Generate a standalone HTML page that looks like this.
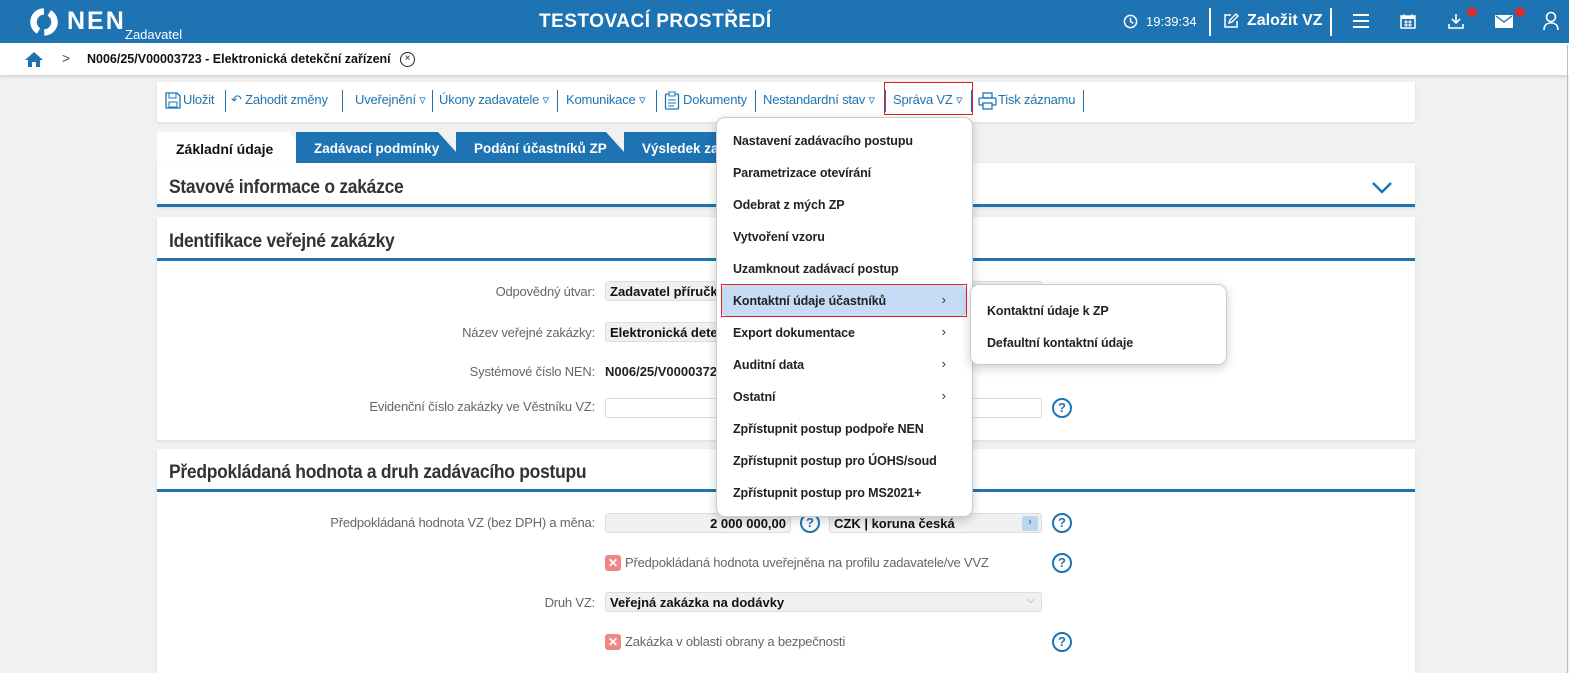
<!DOCTYPE html>
<html><head><meta charset="utf-8"><style>
*{box-sizing:border-box;margin:0;padding:0}
body{width:1569px;height:673px;overflow:hidden;background:#f1f1f1;font-family:"Liberation Sans",Arial,sans-serif;position:relative;font-size:13px;color:#222}
.abs{position:absolute}
.hdr{left:0;top:0;width:1569px;height:43px;background:#1e74b3;color:#fff}
.bc{left:0;top:43px;width:1569px;height:32px;background:#fff;box-shadow:0 2px 3px rgba(0,0,0,.12)}
.panel{background:#fff;left:157px;width:1258px;box-shadow:0 1px 3px rgba(0,0,0,.1)}
.ti{position:absolute;top:92px;color:#1e74b3;font-size:13px;white-space:nowrap;letter-spacing:-.2px}
.sp{position:absolute;top:90px;width:1px;height:22px;background:#1e74b3}
.h2{font-size:19px;color:#333;font-weight:bold;letter-spacing:-.3px;transform:scaleX(.92);transform-origin:left}
.line{left:0;width:1258px;height:3px;background:#1e74b3}
.lbl{color:#666;font-size:13px;text-align:right;width:440px;left:155px;letter-spacing:-.2px}
.inp{left:605px;height:20px;border:1px solid #ddd;border-radius:3px;background:#f0f0f0;font-size:13px;font-weight:bold;padding:2px 4px;color:#111}
.q{width:20px;height:20px;border:2px solid #1e74b3;border-radius:50%;color:#1e74b3;font-weight:bold;font-size:13px;text-align:center;line-height:16px}
.menu{background:#fff;border:1px solid #ccc;border-radius:9px;box-shadow:0 3px 10px rgba(0,0,0,.2)}
.mi{position:absolute;left:16px;font-size:12.5px;font-weight:bold;color:#222;letter-spacing:-.1px}
.arr{position:absolute;right:26px;font-size:13px;color:#333}
.tab{top:132px;height:31px;color:#fff;font-weight:bold;font-size:13.5px;line-height:34px;padding-left:18px;background:#1e74b3;clip-path:polygon(0 0,calc(100% - 28px) 0,100% 100%,0 100%)}
.x{width:16px;height:16px;background:#e88;border-radius:3px;color:#fff;font-size:12px;text-align:center;line-height:16px;font-weight:bold}
</style></head><body>
<div class="abs hdr">
  <svg class="abs" style="left:29px;top:7px" width="30" height="30" viewBox="0 0 30 30"><circle cx="15" cy="15" r="10.5" fill="none" stroke="#fff" stroke-width="6.5" stroke-dasharray="27 6" transform="rotate(-60 15 15)"/></svg>
  <div class="abs" style="left:67px;top:7px;font-size:25px;font-weight:bold;letter-spacing:2px">NEN</div>
  <div class="abs" style="left:125px;top:27px;font-size:13px">Zadavatel</div>
  <div class="abs" style="left:539px;top:11px;font-size:19px;font-weight:bold;letter-spacing:.5px">TESTOVACÍ PROSTŘEDÍ</div>
  <svg class="abs" style="left:1123px;top:14px" width="15" height="15" viewBox="0 0 16 16"><circle cx="8" cy="8" r="6.5" fill="none" stroke="#fff" stroke-width="1.6"/><path d="M8 4v4l3 2" stroke="#fff" stroke-width="1.6" fill="none"/></svg>
  <div class="abs" style="left:1146px;top:14px;font-size:13px">19:39:34</div>
  <div class="abs" style="left:1209px;top:8px;width:2px;height:28px;background:#fff"></div>
  <svg class="abs" style="left:1222px;top:12px" width="18" height="18" viewBox="0 0 18 18"><path d="M9 3H3v12h12V9" fill="none" stroke="#fff" stroke-width="1.5"/><path d="M7 11l1-3 6-6 2 2-6 6z" fill="none" stroke="#fff" stroke-width="1.4"/></svg>
  <div class="abs" style="left:1247px;top:12px;font-size:16px;font-weight:bold">Založit VZ</div>
  <div class="abs" style="left:1330px;top:8px;width:2px;height:28px;background:#fff"></div>
  <div class="abs" style="left:1353px;top:14px;width:16px;height:2px;background:#fff;box-shadow:0 6px 0 #fff,0 12px 0 #fff"></div>
  <svg class="abs" style="left:1400px;top:13px" width="16" height="16" viewBox="0 0 16 16"><rect x="1" y="3" width="14" height="12" fill="none" stroke="#fff" stroke-width="1.5"/><rect x="1" y="3" width="14" height="3" fill="#fff"/><path d="M4 1v3M12 1v3M4 9h8M4 12h8M6 7v7M10 7v7" stroke="#fff"/></svg>
  <svg class="abs" style="left:1447px;top:12px" width="18" height="18" viewBox="0 0 18 18"><path d="M9 2v9M5 7l4 4 4-4M2 12v4h14v-4" fill="none" stroke="#fff" stroke-width="1.6"/></svg>
  <div class="abs" style="left:1467px;top:7px;width:10px;height:10px;border-radius:50%;background:#d32f2f"></div>
  <svg class="abs" style="left:1495px;top:15px" width="18" height="13" viewBox="0 0 18 13"><rect width="18" height="13" rx="1" fill="#fff"/><path d="M1 1l8 6 8-6" fill="none" stroke="#1e74b3" stroke-width="1.3"/></svg>
  <div class="abs" style="left:1515px;top:7px;width:10px;height:10px;border-radius:50%;background:#d32f2f"></div>
  <svg class="abs" style="left:1543px;top:11px" width="16" height="20" viewBox="0 0 16 20"><circle cx="8" cy="6" r="4.5" fill="none" stroke="#fff" stroke-width="1.6"/><path d="M1 19c0-5 3-7 7-7s7 2 7 7" fill="none" stroke="#fff" stroke-width="1.6"/></svg>
</div>
<div class="abs bc">
  <svg class="abs" style="left:24px;top:8px" width="20" height="17" viewBox="0 0 20 17"><path d="M10 1L1 9h3v7h4v-5h4v5h4V9h3z" fill="#1e74b3"/></svg>
  <div class="abs" style="left:62px;top:7px;color:#555;font-size:14px">&gt;</div>
  <div class="abs" style="left:87px;top:9px;font-weight:bold;font-size:12.5px;color:#111">N006/25/V00003723 - Elektronická detekční zařízení</div>
  <div class="abs" style="left:400px;top:9px;width:15px;height:15px;border:1.5px solid #222;border-radius:50%;font-size:10px;text-align:center;line-height:12px">×</div>
</div>
<div class="abs panel" style="top:82px;height:40px"></div>
<svg class="abs" style="left:164px;top:91px" width="18" height="19" viewBox="0 0 18 19"><path d="M2 2h11l3 3v12H2z" fill="none" stroke="#1e74b3" stroke-width="1.3"/><rect x="5" y="2" width="7" height="5" fill="none" stroke="#1e74b3"/><rect x="5" y="11" width="8" height="5" fill="none" stroke="#1e74b3"/></svg>
<div class="ti" style="left:183px">Uložit</div><div class="sp" style="left:225px"></div>
<div class="ti" style="left:231px">↶ Zahodit změny</div><div class="sp" style="left:342px"></div>
<div class="ti" style="left:355px">Uveřejnění ▿</div><div class="sp" style="left:432px"></div>
<div class="ti" style="left:439px">Úkony zadavatele ▿</div><div class="sp" style="left:557px"></div>
<div class="ti" style="left:566px">Komunikace ▿</div><div class="sp" style="left:656px"></div>
<svg class="abs" style="left:664px;top:91px" width="16" height="19" viewBox="0 0 16 19"><rect x="1.5" y="3" width="13" height="15" rx="1" fill="none" stroke="#1e74b3" stroke-width="1.3"/><rect x="5" y="1" width="6" height="4" fill="#fff" stroke="#1e74b3"/><path d="M4 9h8M4 12h8M4 15h6" stroke="#1e74b3"/></svg>
<div class="ti" style="left:683px">Dokumenty</div><div class="sp" style="left:755px"></div>
<div class="ti" style="left:763px">Nestandardní stav ▿</div><div class="sp" style="left:885px"></div>
<div class="ti" style="left:893px">Správa VZ ▿</div><div class="sp" style="left:971px"></div>
<svg class="abs" style="left:978px;top:92px" width="19" height="18" viewBox="0 0 19 18"><rect x="5" y="1" width="9" height="5" fill="none" stroke="#1e74b3" stroke-width="1.3"/><rect x="1" y="6" width="17" height="7" rx="1" fill="none" stroke="#1e74b3" stroke-width="1.3"/><rect x="5" y="11" width="9" height="6" fill="#fff" stroke="#1e74b3" stroke-width="1.3"/></svg>
<div class="ti" style="left:998px">Tisk záznamu</div><div class="sp" style="left:1083px"></div>
<div class="abs" style="left:884px;top:82px;width:89px;height:33px;border:1px solid #e02020"></div>
<div class="abs" style="left:157px;top:132px;width:160px;height:31px;background:#fff;clip-path:polygon(0 0,132px 0,160px 100%,0 100%)"></div>
<div class="abs" style="left:176px;top:141px;font-weight:bold;font-size:14px;color:#111">Základní údaje</div>
<div class="tab abs" style="left:296px;width:170px">Zadávací podmínky</div>
<div class="tab abs" style="left:456px;width:178px">Podání účastníků ZP</div>
<div class="tab abs" style="left:624px;width:120px">Výsledek za</div>
<div class="abs panel" style="top:163px;height:44px">
  <div class="abs h2" style="left:12px;top:14px">Stavové informace o zakázce</div>
  <svg class="abs" style="left:1214px;top:18px" width="22" height="13" viewBox="0 0 22 13"><path d="M2 2l9 9 9-9" fill="none" stroke="#1e74b3" stroke-width="2.5"/></svg>
  <div class="abs line" style="top:41px"></div>
</div>
<div class="abs panel" style="top:217px;height:223px">
  <div class="abs h2" style="left:12px;top:14px">Identifikace veřejné zakázky</div>
  <div class="abs line" style="top:41px"></div>
</div>
<div class="abs lbl" style="top:284px">Odpovědný útvar:</div>
<div class="abs inp" style="top:281px;width:437px">Zadavatel příručka</div>
<div class="abs lbl" style="top:325px">Název veřejné zakázky:</div>
<div class="abs inp" style="top:322px;width:437px">Elektronická detekční zařízení</div>
<div class="abs lbl" style="top:364px">Systémové číslo NEN:</div>
<div class="abs" style="left:605px;top:364px;font-weight:bold">N006/25/V00003723</div>
<div class="abs lbl" style="top:399px">Evidenční číslo zakázky ve Věstníku VZ:</div>
<div class="abs inp" style="top:398px;width:437px;background:#fff"></div>
<div class="abs q" style="left:1052px;top:398px">?</div>
<div class="abs panel" style="top:449px;height:224px">
  <div class="abs h2" style="left:12px;top:13px">Předpokládaná hodnota a druh zadávacího postupu</div>
  <div class="abs line" style="top:40px"></div>
</div>
<div class="abs lbl" style="top:515px">Předpokládaná hodnota VZ (bez DPH) a měna:</div>
<div class="abs inp" style="top:513px;width:186px;text-align:right">2 000 000,00</div>
<div class="abs q" style="left:800px;top:513px">?</div>
<div class="abs inp" style="left:829px;top:513px;width:213px">CZK | koruna česká<span style="position:absolute;right:3px;top:2px;width:16px;height:15px;background:#bcd6f2;border-radius:2px;font-size:11px;text-align:center;color:#456;font-weight:normal">›</span></div>
<div class="abs q" style="left:1052px;top:513px">?</div>
<div class="abs x" style="left:605px;top:555px">✕</div>
<div class="abs" style="left:625px;top:555px;color:#666;letter-spacing:-.2px">Předpokládaná hodnota uveřejněna na profilu zadavatele/ve VVZ</div>
<div class="abs q" style="left:1052px;top:553px">?</div>
<div class="abs lbl" style="top:595px">Druh VZ:</div>
<div class="abs inp" style="top:592px;width:437px">Veřejná zakázka na dodávky<span style="position:absolute;right:6px;top:1px;color:#999;font-weight:normal;font-size:11px">⌵</span></div>
<div class="abs x" style="left:605px;top:634px">✕</div>
<div class="abs" style="left:625px;top:634px;color:#666;letter-spacing:-.2px">Zakázka v oblasti obrany a bezpečnosti</div>
<div class="abs q" style="left:1052px;top:632px">?</div>
<div class="abs" style="left:1567px;top:45px;width:1px;height:628px;background:#bbb"></div>

<div class="abs menu" style="left:716px;top:117px;width:257px;height:400px">
  <div class="mi" style="top:16px">Nastavení zadávacího postupu</div>
  <div class="mi" style="top:48px">Parametrizace otevírání</div>
  <div class="mi" style="top:80px">Odebrat z mých ZP</div>
  <div class="mi" style="top:112px">Vytvoření vzoru</div>
  <div class="mi" style="top:144px">Uzamknout zadávací postup</div>
  <div class="abs" style="left:5px;top:167px;width:244px;height:31px;background:#c5dcf4;border-radius:4px"></div>
  <div class="abs" style="left:4px;top:166px;width:246px;height:33px;border:1px solid #e02020"></div>
  <div class="mi" style="top:176px">Kontaktní údaje účastníků</div><div class="arr" style="top:174px">›</div>
  <div class="mi" style="top:208px">Export dokumentace</div><div class="arr" style="top:206px">›</div>
  <div class="mi" style="top:240px">Auditní data</div><div class="arr" style="top:238px">›</div>
  <div class="mi" style="top:272px">Ostatní</div><div class="arr" style="top:270px">›</div>
  <div class="mi" style="top:304px">Zpřístupnit postup podpoře NEN</div>
  <div class="mi" style="top:336px">Zpřístupnit postup pro ÚOHS/soud</div>
  <div class="mi" style="top:368px">Zpřístupnit postup pro MS2021+</div>
</div>
<div class="abs menu" style="left:970px;top:284px;width:257px;height:81px">
  <div class="mi" style="top:19px">Kontaktní údaje k ZP</div>
  <div class="mi" style="top:51px">Defaultní kontaktní údaje</div>
</div>
</body></html>
